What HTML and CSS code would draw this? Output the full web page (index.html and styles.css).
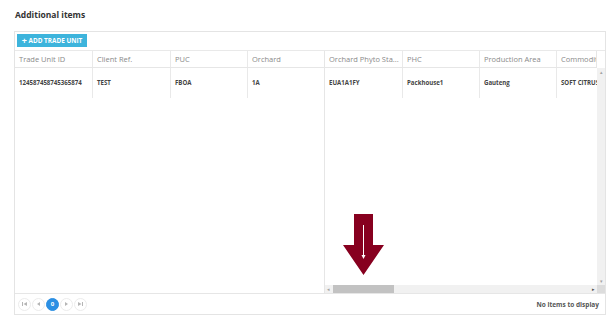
FILE: index.html
```html
<!DOCTYPE html>
<html lang="en">
<head>
    <meta charset="UTF-8">
    <title>Additional items</title>
    <link rel="stylesheet" href="styles.css">
</head>
<body>
    <div class="page">
        <h2 class="title">Additional items</h2>

        <div class="grid">
            <div class="toolbar">
                <button class="add-btn"><span class="plus">+</span> ADD TRADE UNIT</button>
            </div>

            <div class="content">
                <div class="locked">
                    <div class="row head">
                        <div class="cell">Trade Unit ID</div>
                        <div class="cell">Client Ref.</div>
                        <div class="cell">PUC</div>
                        <div class="cell last">Orchard</div>
                    </div>
                    <div class="row data">
                        <div class="cell">124587458745365874</div>
                        <div class="cell">TEST</div>
                        <div class="cell">FBOA</div>
                        <div class="cell last">1A</div>
                    </div>
                </div>

                <div class="scroller">
                    <div class="scroll-head">
                        <div class="row head cols">
                            <div class="cell">Orchard Phyto Sta...</div>
                            <div class="cell">PHC</div>
                            <div class="cell">Production Area</div>
                            <div class="cell">Commodity</div>
                        </div>
                        <div class="head-gap"></div>
                    </div>
                    <div class="scroll-body">
                        <div class="body-cells">
                            <div class="row data cols">
                                <div class="cell">EUA1A1FY</div>
                                <div class="cell">Packhouse1</div>
                                <div class="cell">Gauteng</div>
                                <div class="cell">SOFT CITRUS</div>
                            </div>
                        </div>
                        <div class="vscroll">
                            <span class="sb-arrow">&#9652;</span>
                            <span class="sb-arrow">&#9662;</span>
                        </div>
                    </div>
                    <div class="hscroll">
                        <div class="htrack">
                            <span class="sb-arrow">&#9666;</span>
                            <div class="thumb"></div>
                            <span class="sb-arrow right">&#9656;</span>
                        </div>
                        <div class="corner"></div>
                    </div>
                </div>
            </div>

            <div class="footer">
                <div class="pager">
                    <span class="pg"><svg width="5" height="4" viewBox="0 0 5 4"><rect x="0" y="0" width="1" height="4"/><polygon points="5,0 5,4 1.5,2"/></svg></span>
                    <span class="pg"><svg width="3" height="4" viewBox="0 0 3 4"><polygon points="3,0 3,4 0,2"/></svg></span>
                    <span class="pg active">0</span>
                    <span class="pg"><svg width="3" height="4" viewBox="0 0 3 4"><polygon points="0,0 0,4 3,2"/></svg></span>
                    <span class="pg"><svg width="5" height="4" viewBox="0 0 5 4"><polygon points="0,0 0,4 3.5,2"/><rect x="4" y="0" width="1" height="4"/></svg></span>
                </div>
                <div class="info">No items to display</div>
            </div>
        </div>
    </div>

    <!-- annotation arrow drawn over the grid -->
    <svg class="marker" width="43" height="62" viewBox="0 0 43 62">
        <polygon points="12,0 31,0 31,31 42,31 21.5,61 1,31 12,31" fill="#87001f"/>
        <line x1="21.5" y1="11" x2="21.5" y2="42" stroke="#fff" stroke-width="1"/>
        <polygon points="19.5,41 23.5,41 21.5,45" fill="#fff"/>
    </svg>
</body>
</html>
```

FILE: styles.css
```css
body {
    margin: 0;
    font-family: "Open Sans", Arial, sans-serif;
    background: #fff;
    color: #333;
}
.page {
    padding: 9px 0 0 14px;
}
.title {
    font-size: 8.5px;
    line-height: 12px;
    font-weight: 700;
    margin: 0 0 10px 1px;
    color: #333;
}
.grid {
    width: 592px;
    height: 284px;
    border: 1px solid #e4e4e4;
    box-sizing: border-box;
    display: flex;
    flex-direction: column;
}
.toolbar {
    height: 19px;
    padding: 2px 2px 0;
    box-sizing: border-box;
    border-bottom: 1px solid #e9e9e9;
}
.add-btn {
    display: block;
    width: 70px;
    height: 13px;
    padding: 0;
    border: none;
    background: #3db4dc;
    color: #fff;
    font-family: "Open Sans", Arial, sans-serif;
    font-size: 6.4px;
    font-weight: 700;
    line-height: 13px;
    text-align: center;
    white-space: nowrap;
}
.add-btn .plus {
    font-size: 9px;
    vertical-align: -1px;
}
.content {
    flex: 1;
    display: flex;
    min-height: 0;
}
.locked {
    width: 310px;
    flex: none;
    border-right: 1px solid #e6e6e6;
    box-sizing: border-box;
}
.row {
    display: grid;
    grid-template-columns: 78px 78px 77px 76px;
}
.row.cols {
    grid-template-columns: 78px 77px 77px 77px;
}
.cell {
    border-right: 1px solid #e9e9e9;
    padding-left: 4px;
    white-space: nowrap;
    overflow: hidden;
}
.cell.last {
    border-right: none;
}
.head {
    height: 17px;
    border-bottom: 1px solid #e6e6e6;
    box-sizing: border-box;
    font-size: 7.5px;
    line-height: 16px;
    color: #8a8a8a;
}
.data {
    height: 30px;
    font-size: 6.1px;
    font-weight: 700;
    line-height: 29px;
    color: #444;
}
.scroller {
    flex: 1;
    display: flex;
    flex-direction: column;
    min-width: 0;
}
.scroll-head {
    display: flex;
    height: 17px;
}
.scroll-head .head {
    flex: 1;
    overflow: hidden;
}
.head-gap {
    width: 8px;
    flex: none;
    border-left: 1px solid #e6e6e6;
}
.scroll-body {
    flex: 1;
    display: flex;
    min-height: 0;
}
.body-cells {
    flex: 1;
    overflow: hidden;
}
.vscroll {
    width: 8px;
    flex: none;
    background: #f1f1f1;
    display: flex;
    flex-direction: column;
    justify-content: space-between;
    align-items: center;
}
.sb-arrow {
    font-size: 5px;
    line-height: 8px;
    color: #a3a3a3;
}
.hscroll {
    height: 8px;
    display: flex;
}
.htrack {
    flex: 1;
    background: #f1f1f1;
    display: flex;
    align-items: center;
    padding: 0 2px;
}
.thumb {
    width: 61px;
    height: 8px;
    margin-left: 3px;
    background: #c2c2c2;
}
.sb-arrow.right {
    margin-left: auto;
    color: #505050;
}
.corner {
    width: 8px;
    background: #dcdcdc;
}
.footer {
    height: 20px;
    border-top: 1px solid #e6e6e6;
    display: flex;
    align-items: center;
    justify-content: space-between;
    padding: 0 6px 0 3px;
}
.pager {
    display: flex;
    gap: 1px;
}
.pg {
    width: 13px;
    height: 13px;
    border: 1px solid #ececec;
    border-radius: 50%;
    box-sizing: border-box;
    display: flex;
    align-items: center;
    justify-content: center;
    fill: #b5b5b5;
}
.pg.active {
    background: #2b8fe3;
    border-color: #2b8fe3;
    color: #fff;
    font-size: 6px;
    font-weight: 700;
}
.info {
    font-size: 6.5px;
    font-weight: 700;
    color: #555;
}
.marker {
    position: absolute;
    left: 342px;
    top: 214px;
}
```
